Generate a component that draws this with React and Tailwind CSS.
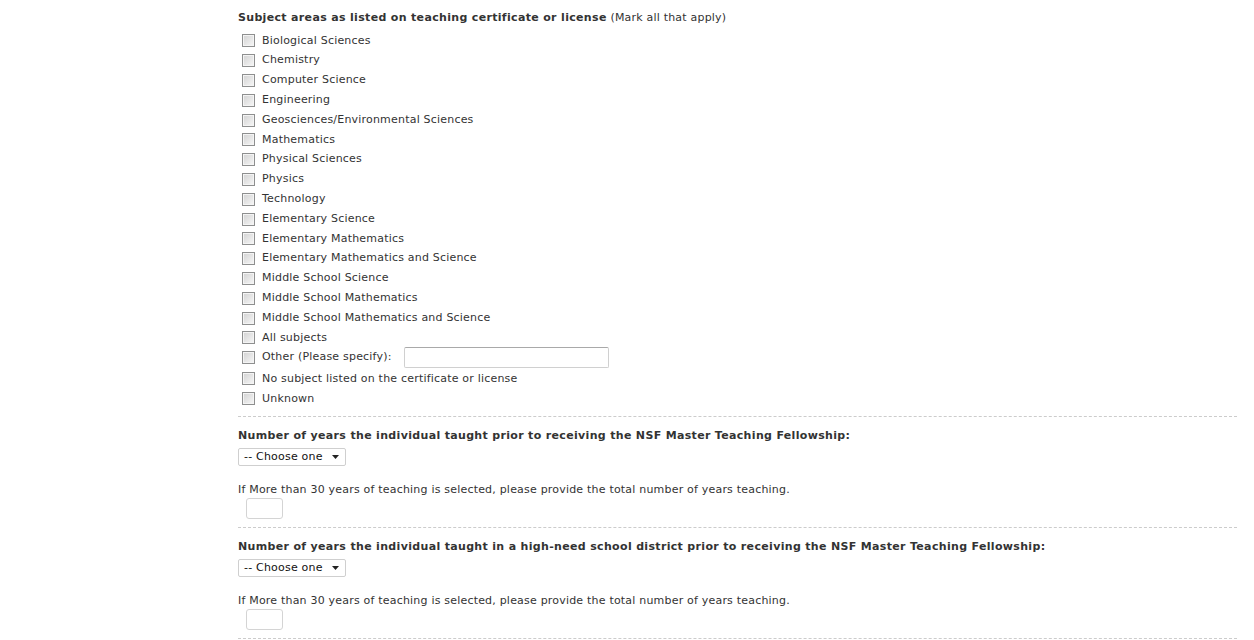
import React from "react";

const subjects = [
  "Biological Sciences",
  "Chemistry",
  "Computer Science",
  "Engineering",
  "Geosciences/Environmental Sciences",
  "Mathematics",
  "Physical Sciences",
  "Physics",
  "Technology",
  "Elementary Science",
  "Elementary Mathematics",
  "Elementary Mathematics and Science",
  "Middle School Science",
  "Middle School Mathematics",
  "Middle School Mathematics and Science",
  "All subjects",
];

const Checkbox = () => (
  <span className="ml-[4px] mr-[7px] w-[13px] h-[13px] shrink-0 border border-[#8e8f8f] bg-gradient-to-br from-[#d2d2d2] to-[#f7f7f7] shadow-[inset_0_0_0_1px_#f4f4f4]"></span>
);

const ChooseOne = () => (
  <div className="flex items-center w-[108px] h-[18px] border border-[#cfcfcf] rounded-[2px] bg-white pl-[5px] pr-[6px] text-[#111]">
    <span className="flex-1">-- Choose one</span>
    <svg width="7" height="4" viewBox="0 0 7 4">
      <path d="M0 0h7L3.5 4z" fill="#222" />
    </svg>
  </div>
);

const YearsBlock = ({ title }) => (
  <div className="border-b border-dashed border-[#cccccc] pt-[12px] pb-[8px]">
    <h3 className="font-bold leading-[14px] tracking-[0.33px]">{title}</h3>
    <div className="mt-[5px]">
      <ChooseOne />
    </div>
    <p className="mt-[17px] leading-[14px]">
      If More than 30 years of teaching is selected, please provide the total number of years teaching.
    </p>
    <div className="mt-[1px] ml-[8px] w-[37px] h-[21px] border border-[#d4d4d4] rounded-[3px] bg-white"></div>
  </div>
);

export default function App() {
  return (
    <div className="min-h-screen bg-white text-[#333] text-[11px] tracking-[0.2px] font-['DejaVu_Sans',Verdana,sans-serif]">
      <div className="ml-[238px] w-[999px]">
        {/* SUBJECT AREAS */}
        <div className="border-b border-dashed border-[#cccccc] pt-[11px] pb-[7px]">
          <h3 className="leading-[14px]">
            <span className="font-bold tracking-[0.33px]">Subject areas as listed on teaching certificate or license</span>{" "}
            (Mark all that apply)
          </h3>
          <div className="mt-[6px]">
            {subjects.map((s) => (
              <div key={s} className="flex items-center h-[19.8px]">
                <Checkbox />
                <span>{s}</span>
              </div>
            ))}
            <div className="flex items-center h-[21px] mt-[-1px]">
              <Checkbox />
              <span>Other (Please specify):</span>
              <div className="ml-[12px] w-[205px] h-[21px] border border-[#d0d0d0] border-t-[#a9a9a9] rounded-[2px] bg-white"></div>
            </div>
            <div className="flex items-center h-[20px] mt-[1px]">
              <Checkbox />
              <span>No subject listed on the certificate or license</span>
            </div>
            <div className="flex items-center h-[20px]">
              <Checkbox />
              <span>Unknown</span>
            </div>
          </div>
        </div>

        <YearsBlock title="Number of years the individual taught prior to receiving the NSF Master Teaching Fellowship:" />
        <YearsBlock title="Number of years the individual taught in a high-need school district prior to receiving the NSF Master Teaching Fellowship:" />
      </div>
    </div>
  );
}
